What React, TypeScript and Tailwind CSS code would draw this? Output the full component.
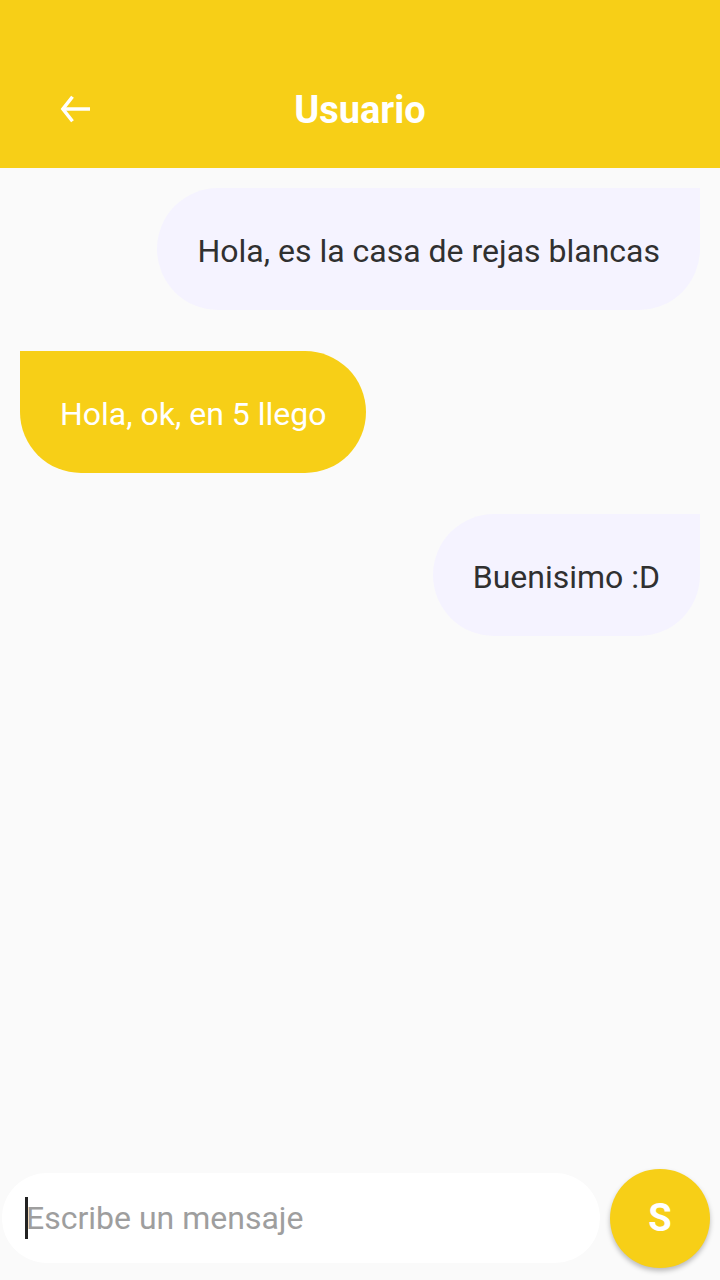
import React from "react";

export default function App() {
  const font = { fontFamily: "Roboto, 'Noto Sans', sans-serif" };
  return (
    <div className="w-[720px] h-[1280px] bg-[#fafafa] flex flex-col overflow-hidden" style={font}>
      <div className="h-[168px] bg-[#f7cf17] flex items-end shrink-0">
        <div className="h-[120px] w-full flex items-center relative">
          <div className="w-[152px] pl-[55px] flex items-center mt-[2px]">
            <svg width="42" height="42" viewBox="0 0 24 24" fill="none" stroke="white" strokeWidth="2" strokeLinecap="butt" strokeLinejoin="miter">
              <path d="M20 12H4" />
              <path d="M10 5l-5.5 7L10 19" />
            </svg>
          </div>
          <div className="flex-1 text-center pr-[152px] text-white font-bold text-[38px] leading-none mt-[4px]">Usuario</div>
        </div>
      </div>
      <div className="flex-1 flex flex-col gap-[41px] px-[20px] pt-[20px]">
        <div className="self-end h-[122px] bg-[#f5f3ff] rounded-[61px] rounded-tr-none px-[40px] flex items-center text-[32px] text-[#303030] pt-[4px]">
          Hola, es la casa de rejas blancas
        </div>
        <div className="self-start h-[122px] bg-[#f7cf17] rounded-[61px] rounded-tl-none px-[40px] flex items-center text-[32px] text-white pt-[4px]">
          Hola, ok, en 5 llego
        </div>
        <div className="self-end h-[122px] bg-[#f5f3ff] rounded-[61px] rounded-tr-none px-[40px] flex items-center text-[32px] text-[#303030] pt-[4px]">
          Buenisimo :D
        </div>
      </div>
      <div className="h-[112px] flex items-start pl-[2px] pr-[10px] gap-[10px] shrink-0">
        <div className="mt-[5px] w-[598px] h-[90px] bg-white rounded-full flex items-center pl-[23px]">
          <div className="w-[3px] h-[42px] bg-[#222]"></div>
          <span className="text-[32px] text-[#9e9e9e] -ml-[2px]">Escribe un mensaje</span>
        </div>
        <div className="mt-[1px] w-[100px] h-[99px] rounded-full bg-[#f7cf17] shadow-[0_3px_5px_rgba(0,0,0,0.25)] flex items-center justify-center text-white font-bold text-[38px]">
          S
        </div>
      </div>
    </div>
  );
}
